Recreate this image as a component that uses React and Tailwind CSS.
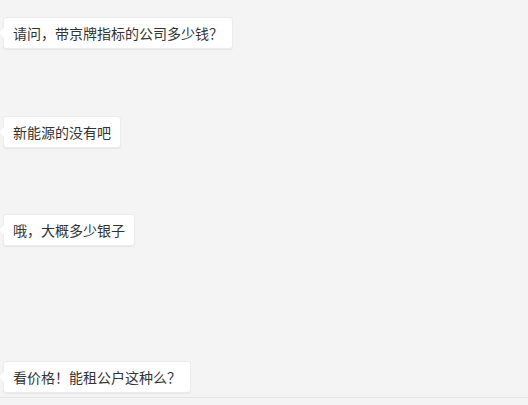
const messages = [
  { text: '请问，带京牌指标的公司多少钱？', top: 'mt-[17px]' },
  { text: '新能源的没有吧', top: 'mt-[67px]' },
  { text: '哦，大概多少银子', top: 'mt-[66px]' },
  { text: '看价格！能租公户这种么？', top: 'mt-[115px]' },
];

function Bubble({ text, top }) {
  return (
    <div className={`${top} flex`}>
      <div className="relative ml-[3px] h-[32px] flex items-center rounded-[3px] bg-white px-[9px] text-[14px] text-[#333] shadow-[0_1px_1px_rgba(0,0,0,0.06)] border border-[#ececec]">
        <span className="absolute left-[-5px] top-1/2 -translate-y-1/2 h-0 w-0 border-y-[5px] border-r-[5px] border-y-transparent border-r-white" />
        {text}
      </div>
    </div>
  );
}

export default function App() {
  return (
    <div
      className="h-[405px] w-[528px] overflow-hidden bg-[#f4f4f4] flex flex-col"
      style={{ fontFamily: '"Microsoft YaHei", "Noto Sans CJK SC", sans-serif' }}
    >
      {messages.map(m => (
        <Bubble key={m.text} text={m.text} top={m.top} />
      ))}
      <div className="mt-[4px] border-t border-[#e4e4e4] flex-1 bg-[#f4f4f4]" />
    </div>
  );
}
